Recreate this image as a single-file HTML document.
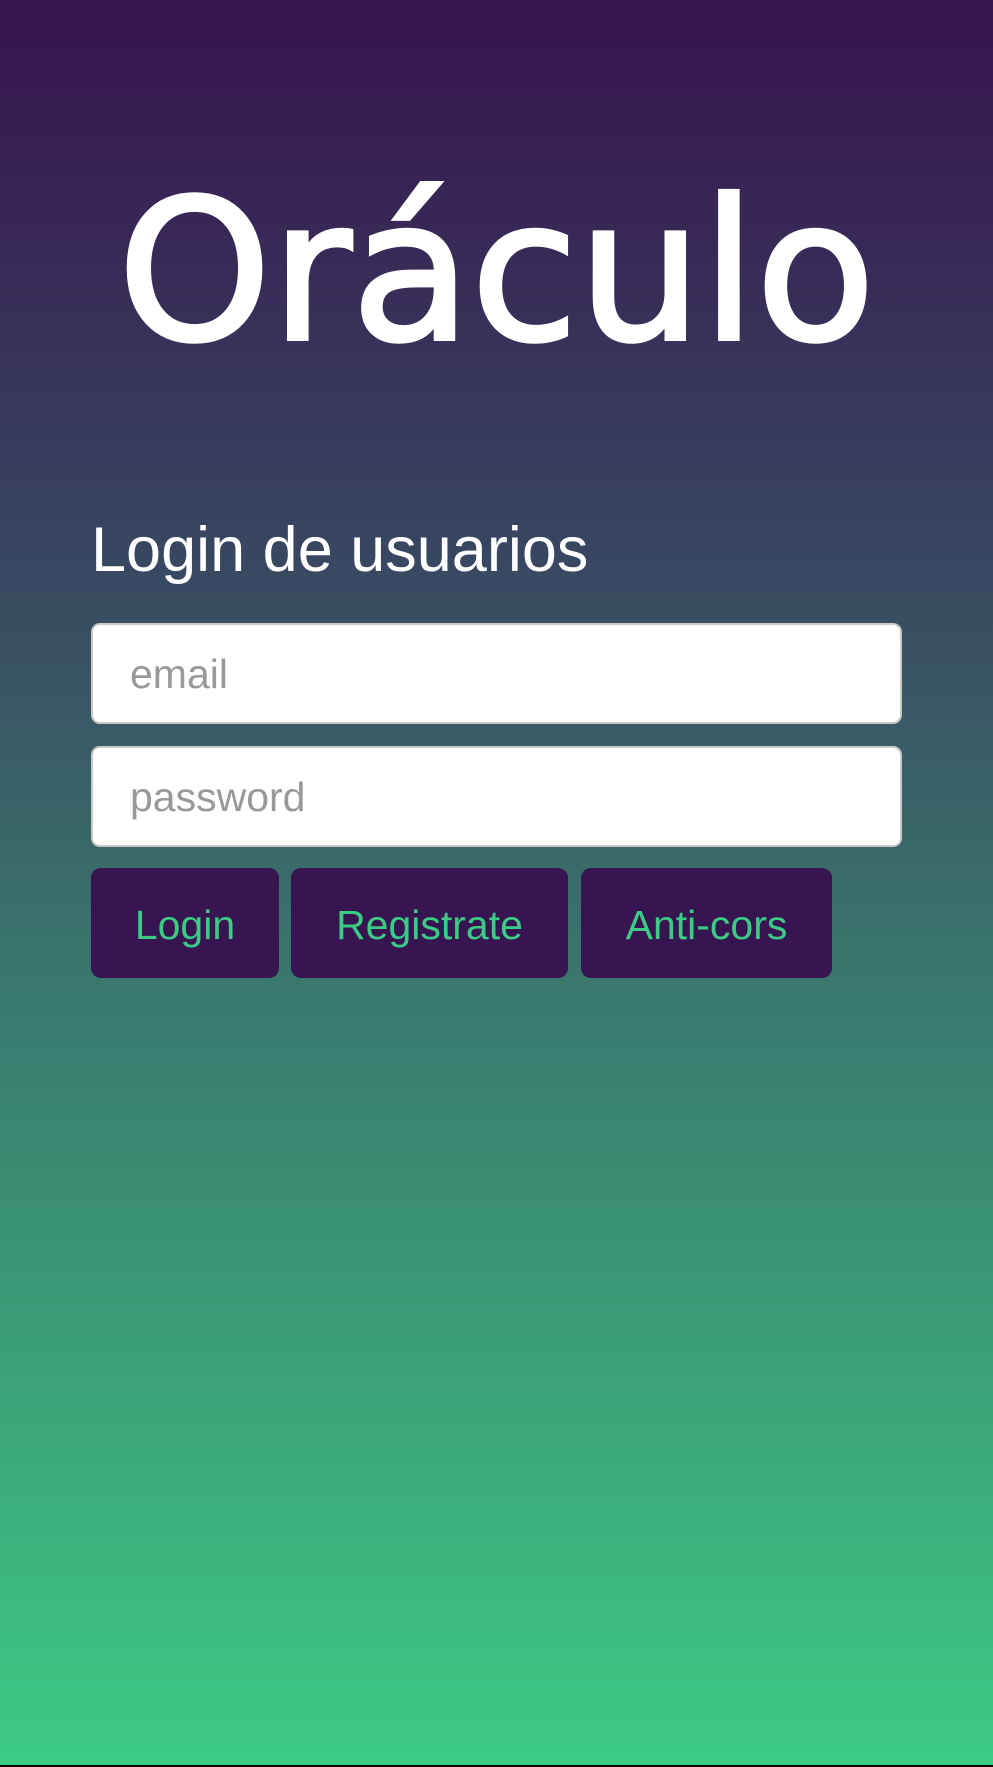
<!DOCTYPE html>
<html><head><meta charset="utf-8"><style>
html,body{margin:0;padding:0;}
body{width:993px;height:1767px;position:relative;overflow:hidden;
background:linear-gradient(to bottom,#37134f 0%,#38405f 28%,#3a7a6e 57%,#3ccb84 100%);
font-family:"Liberation Sans",Arial,sans-serif;}
.bar{position:absolute;left:0;right:0;bottom:0;height:2px;background:#000;}
h1{position:absolute;left:0;width:993px;top:132px;margin:0;text-align:center;
font-family:"Comic Sans MS","DejaVu Sans",sans-serif;font-weight:normal;font-size:195px;line-height:280px;color:#fff;-webkit-text-stroke:4px #fff;}
h2{position:absolute;left:91px;top:505px;margin:0;font-weight:normal;font-size:63px;line-height:90px;color:#fff;}
.in{position:absolute;left:91px;width:807px;height:97px;background:#fff;border:2px solid #c9c9c9;border-radius:9px;
box-sizing:content-box;font-size:41px;line-height:97px;color:#999;}
.in span{position:absolute;left:37px;top:1px;}
.b{position:absolute;top:868px;height:110px;background:#371551;border-radius:10px;color:#3ccb84;font-size:41px;line-height:114px;text-align:center;}
</style></head><body>
<h1>Oráculo</h1>
<h2>Login de usuarios</h2>
<div class="in" style="top:623px"><span>email</span></div>
<div class="in" style="top:746px"><span>password</span></div>
<div class="b" style="left:91px;width:188px">Login</div>
<div class="b" style="left:291px;width:277px">Registrate</div>
<div class="b" style="left:581px;width:251px">Anti-cors</div>
<div class="bar"></div>
</body></html>
